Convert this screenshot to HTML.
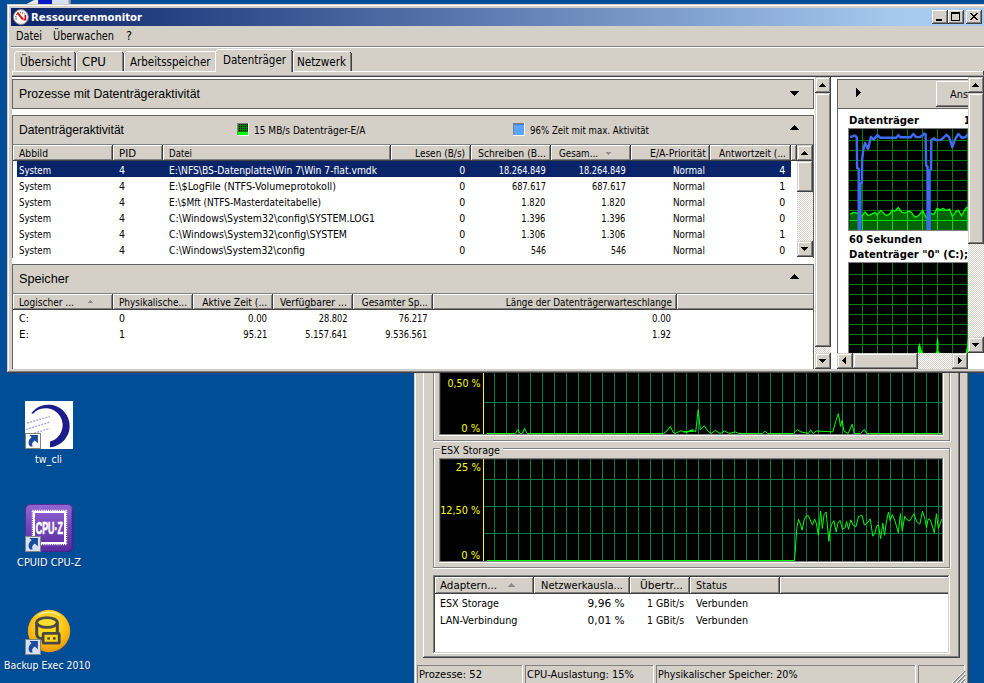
<!DOCTYPE html>
<html lang="de"><head><meta charset="utf-8"><title>Ressourcenmonitor</title><style>
html,body{margin:0;padding:0}
body{width:984px;height:683px;overflow:hidden;background:#004e98;position:relative;font-family:"DejaVu Sans Condensed","DejaVu Sans","Liberation Sans",sans-serif;font-stretch:condensed;font-size:11px}
div,span,svg{position:absolute}
span{white-space:pre}
.hatch{background-image:conic-gradient(#fff 25%,#d4d0c8 0 50%,#fff 0 75%,#d4d0c8 0);background-size:2px 2px}
</style></head><body>
<svg style="left:26px;top:0px;" width="46" height="4" viewBox="0 0 46 4"><polygon points="8,0 12.3,0 12.3,4 0.7,4" fill="#e6e6ec"/><rect x="12.3" y="0" width="13.7" height="4" fill="#0818c4"/><rect x="26" y="0" width="16.8" height="4" fill="#d4e0f6"/><rect x="42.8" y="0" width="1.9" height="4" fill="#a89888"/></svg>
<svg style="left:0;top:395px" width="100" height="265" viewBox="0 395 100 265"><rect x="25" y="401" width="48" height="48" fill="#fff"/><path d="M31.3 413.2A21.3 21.3 0 1 1 50.0 447.2L50.0 441.6A17.0 17.0 0 1 0 33.0 413.8Z" fill="#1c1c8a"/><path d="M27 423L50 416.5M26 429.5L50 422M28 435L50 428.5" stroke="#a8a4cc" stroke-width="1.3" stroke-dasharray="2 1.2" fill="none"/><g transform="translate(25,433)"><rect x="0.5" y="0.5" width="15" height="15" fill="#fff" stroke="#84847c"/><path d="M4.4 2H12.9V10.2L9.8 7.6C7.5 9 6.4 11 7.6 13.5L5.3 13.4C2.8 11 3 7 6.6 4.2Z" fill="#1c4a9c"/></g><defs><linearGradient id="pz" x1="0" y1="0" x2="0" y2="1"><stop offset="0" stop-color="#9368d2"/><stop offset="0.5" stop-color="#7442b8"/><stop offset="1" stop-color="#5a2a9e"/></linearGradient><radialGradient id="by" cx="0.5" cy="0.35" r="0.65"><stop offset="0" stop-color="#ffe648"/><stop offset="0.55" stop-color="#ffc818"/><stop offset="0.85" stop-color="#f4a808"/><stop offset="1" stop-color="#e89400"/></radialGradient></defs><rect x="25.5" y="504.5" width="47" height="47" rx="5" fill="url(#pz)" stroke="#5a2c9c"/><path d="M72.2 509V547A4.5 4.5 0 0 1 67.5 551.5H30" fill="none" stroke="#47208c" stroke-width="1.2"/><rect x="32.5" y="510.5" width="34" height="34" fill="none" stroke="#fff" stroke-width="1.4" stroke-dasharray="1.2 1"/><rect x="34" y="512" width="31" height="31" fill="none" stroke="#fff" stroke-width="2"/><text x="49.3" y="534" stroke="#fff" stroke-width="0.7" font-family="'Liberation Sans',sans-serif" font-weight="bold" font-size="16" fill="#fff" text-anchor="middle" textLength="27" lengthAdjust="spacingAndGlyphs">CPU·Z</text><g transform="translate(25,536)"><rect x="0.5" y="0.5" width="15" height="15" fill="#d6e0f2" stroke="#84847c"/><path d="M4.4 2H12.9V10.2L9.8 7.6C7.5 9 6.4 11 7.6 13.5L5.3 13.4C2.8 11 3 7 6.6 4.2Z" fill="#1c4a9c"/></g><circle cx="49" cy="631" r="21.2" fill="url(#by)"/><path d="M36.8 622.5v13a10.2 4.8 0 0 0 10 4.6v-8" fill="#ffd81c" stroke="none"/><path d="M36.8 622.5v12.5a10.2 4.8 0 0 0 7 4.3M57.2 622.5v10" fill="#ffd81c" stroke="#484848" stroke-width="2.8"/><path d="M36.8 622.5h20.4v11h-20.4z" fill="#ffd81c"/><path d="M36.8 622.5v12.5M57.2 622.5v10" fill="none" stroke="#484848" stroke-width="2.8"/><ellipse cx="47" cy="622.5" rx="10.2" ry="4.8" fill="#ffe030" stroke="#484848" stroke-width="2.8"/><rect x="43.1" y="633.4" width="16.1" height="9.8" rx="0.8" fill="#ffd414" stroke="#484848" stroke-width="2.8"/><rect x="47.3" y="637.2" width="2.6" height="2.4" fill="#484848"/><rect x="53" y="637.2" width="2.6" height="2.4" fill="#484848"/><path d="M38 615.5A14 9 0 0 1 60 616" fill="none" stroke="#fff4c0" stroke-width="1.6" opacity="0.75"/><g transform="translate(25,639)"><rect x="0.5" y="0.5" width="15" height="15" fill="#d6e0f2" stroke="#84847c"/><path d="M4.4 2H12.9V10.2L9.8 7.6C7.5 9 6.4 11 7.6 13.5L5.3 13.4C2.8 11 3 7 6.6 4.2Z" fill="#1c4a9c"/></g></svg>
<span id="t1" style="top:451.5px;line-height:15px;font-size:11px;color:#fff;left:34.5px;transform-origin:0 0;transform:scaleX(0.9686);text-shadow:1px 1px 0 rgba(0,35,80,0.55);">tw_cli</span>
<span id="t2" style="top:554.5px;line-height:15px;font-size:11px;color:#fff;left:16.5px;transform-origin:0 0;transform:scaleX(0.9956);text-shadow:1px 1px 0 rgba(0,35,80,0.55);">CPUID CPU-Z</span>
<span id="t3" style="top:657.5px;line-height:15px;font-size:11px;color:#fff;left:4.0px;transform-origin:0 0;transform:scaleX(0.9504);text-shadow:1px 1px 0 rgba(0,35,80,0.55);">Backup Exec 2010</span>
<div style="left:414px;top:360px;width:555px;height:330px;background:#d4d0c8;"></div>
<div style="left:415px;top:360px;width:1px;height:330px;background:#ffffff;"></div>
<div style="left:967px;top:360px;width:1px;height:330px;background:#808080;"></div>
<div style="left:968px;top:360px;width:1px;height:330px;background:#404040;"></div>
<div style="left:423px;top:360px;width:1px;height:297px;background:#ffffff;"></div>
<div style="left:958px;top:360px;width:1px;height:298px;background:#808080;"></div>
<div style="left:959px;top:360px;width:1px;height:298px;background:#404040;"></div>
<div style="left:424px;top:656px;width:535px;height:1px;background:#808080;"></div>
<div style="left:423px;top:657px;width:537px;height:1px;background:#404040;"></div>
<div style="left:433px;top:360px;width:1px;height:81px;background:#808080;"></div>
<div style="left:434px;top:360px;width:1px;height:80px;background:#ffffff;"></div>
<div style="left:433px;top:440px;width:517px;height:1px;background:#808080;"></div>
<div style="left:433px;top:441px;width:518px;height:1px;background:#ffffff;"></div>
<div style="left:949px;top:360px;width:1px;height:81px;background:#808080;"></div>
<div style="left:950px;top:360px;width:1px;height:82px;background:#ffffff;"></div>
<div style="left:439px;top:360px;width:505px;height:76px;background:#ffffff;"></div>
<div style="left:439px;top:360px;width:504px;height:75px;background:#808080;"></div>
<div style="left:440px;top:360px;width:502px;height:74px;background:#000;"></div>
<div style="left:440px;top:360px;width:1px;height:74px;background:#202020;"></div>
<div style="left:433px;top:448px;width:517px;height:1px;background:#808080;"></div>
<div style="left:434px;top:449px;width:516px;height:1px;background:#ffffff;"></div>
<div style="left:433px;top:448px;width:1px;height:120px;background:#808080;"></div>
<div style="left:434px;top:449px;width:1px;height:118px;background:#ffffff;"></div>
<div style="left:433px;top:567px;width:517px;height:1px;background:#808080;"></div>
<div style="left:433px;top:568px;width:518px;height:1px;background:#ffffff;"></div>
<div style="left:949px;top:448px;width:1px;height:120px;background:#808080;"></div>
<div style="left:950px;top:448px;width:1px;height:121px;background:#ffffff;"></div>
<div style="left:440px;top:444px;width:63px;height:12px;background:#d4d0c8;"></div>
<span id="t4" style="top:442.5px;line-height:15px;font-size:11px;color:#000;left:440.5px;transform-origin:0 0;transform:scaleX(0.9642);">ESX Storage</span>
<div style="left:439px;top:458px;width:505px;height:105px;background:#ffffff;"></div>
<div style="left:439px;top:458px;width:504px;height:104px;background:#808080;"></div>
<div style="left:440px;top:459px;width:502px;height:102px;background:#000;"></div>
<div style="left:440px;top:459px;width:502px;height:1px;background:#202020;"></div>
<div style="left:440px;top:459px;width:1px;height:102px;background:#202020;"></div>
<svg style="left:440px;top:372px" width="502" height="191" viewBox="440 372 502 191"><rect x="494" y="372" width="1" height="62" fill="#008040"/><rect x="494" y="459" width="1" height="102" fill="#008040"/><rect x="506" y="372" width="1" height="62" fill="#008040"/><rect x="506" y="459" width="1" height="102" fill="#008040"/><rect x="518" y="372" width="1" height="62" fill="#008040"/><rect x="518" y="459" width="1" height="102" fill="#008040"/><rect x="530" y="372" width="1" height="62" fill="#008040"/><rect x="530" y="459" width="1" height="102" fill="#008040"/><rect x="542" y="372" width="1" height="62" fill="#008040"/><rect x="542" y="459" width="1" height="102" fill="#008040"/><rect x="554" y="372" width="1" height="62" fill="#008040"/><rect x="554" y="459" width="1" height="102" fill="#008040"/><rect x="566" y="372" width="1" height="62" fill="#008040"/><rect x="566" y="459" width="1" height="102" fill="#008040"/><rect x="578" y="372" width="1" height="62" fill="#008040"/><rect x="578" y="459" width="1" height="102" fill="#008040"/><rect x="590" y="372" width="1" height="62" fill="#008040"/><rect x="590" y="459" width="1" height="102" fill="#008040"/><rect x="602" y="372" width="1" height="62" fill="#008040"/><rect x="602" y="459" width="1" height="102" fill="#008040"/><rect x="614" y="372" width="1" height="62" fill="#008040"/><rect x="614" y="459" width="1" height="102" fill="#008040"/><rect x="626" y="372" width="1" height="62" fill="#008040"/><rect x="626" y="459" width="1" height="102" fill="#008040"/><rect x="638" y="372" width="1" height="62" fill="#008040"/><rect x="638" y="459" width="1" height="102" fill="#008040"/><rect x="650" y="372" width="1" height="62" fill="#008040"/><rect x="650" y="459" width="1" height="102" fill="#008040"/><rect x="662" y="372" width="1" height="62" fill="#008040"/><rect x="662" y="459" width="1" height="102" fill="#008040"/><rect x="674" y="372" width="1" height="62" fill="#008040"/><rect x="674" y="459" width="1" height="102" fill="#008040"/><rect x="686" y="372" width="1" height="62" fill="#008040"/><rect x="686" y="459" width="1" height="102" fill="#008040"/><rect x="698" y="372" width="1" height="62" fill="#008040"/><rect x="698" y="459" width="1" height="102" fill="#008040"/><rect x="710" y="372" width="1" height="62" fill="#008040"/><rect x="710" y="459" width="1" height="102" fill="#008040"/><rect x="722" y="372" width="1" height="62" fill="#008040"/><rect x="722" y="459" width="1" height="102" fill="#008040"/><rect x="734" y="372" width="1" height="62" fill="#008040"/><rect x="734" y="459" width="1" height="102" fill="#008040"/><rect x="746" y="372" width="1" height="62" fill="#008040"/><rect x="746" y="459" width="1" height="102" fill="#008040"/><rect x="758" y="372" width="1" height="62" fill="#008040"/><rect x="758" y="459" width="1" height="102" fill="#008040"/><rect x="770" y="372" width="1" height="62" fill="#008040"/><rect x="770" y="459" width="1" height="102" fill="#008040"/><rect x="782" y="372" width="1" height="62" fill="#008040"/><rect x="782" y="459" width="1" height="102" fill="#008040"/><rect x="794" y="372" width="1" height="62" fill="#008040"/><rect x="794" y="459" width="1" height="102" fill="#008040"/><rect x="806" y="372" width="1" height="62" fill="#008040"/><rect x="806" y="459" width="1" height="102" fill="#008040"/><rect x="818" y="372" width="1" height="62" fill="#008040"/><rect x="818" y="459" width="1" height="102" fill="#008040"/><rect x="830" y="372" width="1" height="62" fill="#008040"/><rect x="830" y="459" width="1" height="102" fill="#008040"/><rect x="842" y="372" width="1" height="62" fill="#008040"/><rect x="842" y="459" width="1" height="102" fill="#008040"/><rect x="854" y="372" width="1" height="62" fill="#008040"/><rect x="854" y="459" width="1" height="102" fill="#008040"/><rect x="866" y="372" width="1" height="62" fill="#008040"/><rect x="866" y="459" width="1" height="102" fill="#008040"/><rect x="878" y="372" width="1" height="62" fill="#008040"/><rect x="878" y="459" width="1" height="102" fill="#008040"/><rect x="890" y="372" width="1" height="62" fill="#008040"/><rect x="890" y="459" width="1" height="102" fill="#008040"/><rect x="902" y="372" width="1" height="62" fill="#008040"/><rect x="902" y="459" width="1" height="102" fill="#008040"/><rect x="914" y="372" width="1" height="62" fill="#008040"/><rect x="914" y="459" width="1" height="102" fill="#008040"/><rect x="926" y="372" width="1" height="62" fill="#008040"/><rect x="926" y="459" width="1" height="102" fill="#008040"/><rect x="938" y="372" width="1" height="62" fill="#008040"/><rect x="938" y="459" width="1" height="102" fill="#008040"/><rect x="483" y="402" width="459" height="1" fill="#008040"/><rect x="483" y="479" width="459" height="1" fill="#008040"/><rect x="483" y="506" width="459" height="1" fill="#008040"/><rect x="483" y="533" width="459" height="1" fill="#008040"/><rect x="483" y="372" width="1" height="62" fill="#ffff00"/><rect x="483" y="459" width="1" height="102" fill="#ffff00"/><polyline points="486.7,433.5 515.3,433.5 517.9,429.4 520.0,433.5 522.4,433.5 524.5,428.1 527.1,433.5 663.2,433.5 667.2,430.8 670.3,426.3 673.0,432.1 675.1,433.5 680.4,430.8 687.0,432.1 691.0,430.2 693.6,431.3 683.5,431.9 688.1,431.9 692.7,429.5 695.7,431.9 698.2,409.6 700.3,429.5 704.3,425.8 707.9,431.0 711.0,433.5 715.5,430.4 720.1,433.5 724.7,431.0 729.3,433.5 735.4,431.9 738.4,433.5 762.8,433.5 765.2,431.0 767.4,433.5 793.3,433.5 797.3,429.5 800.9,431.9 808.5,433.5 810.7,429.8 813.1,433.5 816.2,431.0 832.9,431.9 836.0,420.3 838.4,413.6 840.5,426.4 842.1,420.3 843.9,431.0 848.2,433.5 852.1,424.3 854.3,433.5 860.4,433.5 864.3,429.5 866.5,433.5 875.6,433.5 878.7,433.5 887.8,433.5 890.9,433.5 903.0,433.5 909.1,433.5 915.2,433.5 921.3,433.5 930.5,433.5 932.0,433.5 941.8,433.5" fill="none" stroke="#00ff00" stroke-width="1"/><polyline points="487.0,560.5 794.3,560.5 795.2,552.6 796.1,537.9 796.9,527.6 798.5,519.3 800.4,524.1 802.1,530.2 804.2,519.8 805.9,516.3 808.2,515.5 810.2,519.8 812.5,525.0 814.6,518.9 816.3,523.2 818.4,535.3 820.6,511.2 822.3,528.4 824.1,514.6 826.1,512.0 828.9,541.4 830.1,529.3 831.8,524.1 833.9,520.7 836.2,531.9 837.9,523.2 840.0,520.3 842.5,529.3 845.3,527.6 846.5,521.5 848.6,529.3 850.8,519.8 852.9,525.0 856.0,526.7 858.6,516.3 862.1,515.5 864.3,525.0 867.2,523.2 870.2,518.9 872.8,536.2 874.7,533.6 876.8,525.8 878.5,525.0 880.6,538.8 882.8,523.2 884.5,535.3 886.3,522.4 888.5,512.0 890.2,520.7 892.3,514.6 894.9,520.7 898.3,532.7 900.4,513.7 902.3,531.0 904.7,516.3 907.0,519.8 909.9,520.7 913.9,513.7 916.5,521.5 919.9,524.1 922.5,511.2 925.1,519.8 926.5,527.6 928.2,518.9 930.3,519.8 934.3,532.7 936.4,513.7 938.4,528.4 941.9,518.9" fill="none" stroke="#00ff00" stroke-width="1"/></svg>
<span id="t5" style="top:376.5px;line-height:14px;font-size:10px;color:#ffff00;right:503.5px;transform-origin:100% 0;transform:scaleX(1.0497);">0,50 %</span>
<span id="t6" style="top:421.5px;line-height:14px;font-size:10px;color:#ffff00;right:503.5px;transform-origin:100% 0;transform:scaleX(1.1085);">0 %</span>
<span id="t7" style="top:461.0px;line-height:14px;font-size:10px;color:#ffff00;right:503.5px;transform-origin:100% 0;transform:scaleX(1.0936);">25 %</span>
<span id="t8" style="top:503.5px;line-height:14px;font-size:10px;color:#ffff00;right:503.5px;transform-origin:100% 0;transform:scaleX(1.0765);">12,50 %</span>
<span id="t9" style="top:549.0px;line-height:14px;font-size:10px;color:#ffff00;right:503.5px;transform-origin:100% 0;transform:scaleX(1.1085);">0 %</span>
<div style="left:433px;top:575px;width:517px;height:79px;background:#ffffff;"></div>
<div style="left:433px;top:575px;width:516px;height:1px;background:#808080;"></div>
<div style="left:433px;top:575px;width:1px;height:78px;background:#808080;"></div>
<div style="left:434px;top:576px;width:514px;height:1px;background:#404040;"></div>
<div style="left:434px;top:576px;width:1px;height:76px;background:#404040;"></div>
<div style="left:433px;top:653px;width:517px;height:1px;background:#ffffff;"></div>
<div style="left:949px;top:575px;width:1px;height:79px;background:#ffffff;"></div>
<div style="left:434px;top:652px;width:515px;height:1px;background:#d4d0c8;"></div>
<div style="left:948px;top:576px;width:1px;height:77px;background:#d4d0c8;"></div>
<div style="left:435px;top:577px;width:99px;height:17px;background:#d4d0c8;"></div>
<div style="left:435px;top:577px;width:98px;height:1px;background:#ffffff;"></div>
<div style="left:435px;top:577px;width:1px;height:16px;background:#ffffff;"></div>
<div style="left:435px;top:593px;width:99px;height:1px;background:#404040;"></div>
<div style="left:533px;top:577px;width:1px;height:17px;background:#404040;"></div>
<div style="left:436px;top:592px;width:97px;height:1px;background:#808080;"></div>
<div style="left:532px;top:578px;width:1px;height:15px;background:#808080;"></div>
<div style="left:534px;top:577px;width:96px;height:17px;background:#d4d0c8;"></div>
<div style="left:534px;top:577px;width:95px;height:1px;background:#ffffff;"></div>
<div style="left:534px;top:577px;width:1px;height:16px;background:#ffffff;"></div>
<div style="left:534px;top:593px;width:96px;height:1px;background:#404040;"></div>
<div style="left:629px;top:577px;width:1px;height:17px;background:#404040;"></div>
<div style="left:535px;top:592px;width:94px;height:1px;background:#808080;"></div>
<div style="left:628px;top:578px;width:1px;height:15px;background:#808080;"></div>
<div style="left:630px;top:577px;width:60px;height:17px;background:#d4d0c8;"></div>
<div style="left:630px;top:577px;width:59px;height:1px;background:#ffffff;"></div>
<div style="left:630px;top:577px;width:1px;height:16px;background:#ffffff;"></div>
<div style="left:630px;top:593px;width:60px;height:1px;background:#404040;"></div>
<div style="left:689px;top:577px;width:1px;height:17px;background:#404040;"></div>
<div style="left:631px;top:592px;width:58px;height:1px;background:#808080;"></div>
<div style="left:688px;top:578px;width:1px;height:15px;background:#808080;"></div>
<div style="left:690px;top:577px;width:90px;height:17px;background:#d4d0c8;"></div>
<div style="left:690px;top:577px;width:89px;height:1px;background:#ffffff;"></div>
<div style="left:690px;top:577px;width:1px;height:16px;background:#ffffff;"></div>
<div style="left:690px;top:593px;width:90px;height:1px;background:#404040;"></div>
<div style="left:779px;top:577px;width:1px;height:17px;background:#404040;"></div>
<div style="left:691px;top:592px;width:88px;height:1px;background:#808080;"></div>
<div style="left:778px;top:578px;width:1px;height:15px;background:#808080;"></div>
<div style="left:780px;top:577px;width:168px;height:17px;background:#d4d0c8;"></div>
<div style="left:780px;top:577px;width:168px;height:1px;background:#ffffff;"></div>
<div style="left:780px;top:577px;width:1px;height:16px;background:#ffffff;"></div>
<div style="left:780px;top:593px;width:168px;height:1px;background:#404040;"></div>
<div style="left:781px;top:592px;width:167px;height:1px;background:#808080;"></div>
<span id="t10" style="top:578.0px;line-height:15px;font-size:11px;color:#000;left:440.0px;transform-origin:0 0;transform:scaleX(1.0411);">Adaptern...</span>
<span id="t11" style="top:578.0px;line-height:15px;font-size:11px;color:#000;left:540.5px;transform-origin:0 0;transform:scaleX(0.9989);">Netzwerkausla...</span>
<span id="t12" style="top:578.0px;line-height:15px;font-size:11px;color:#000;left:639.5px;transform-origin:0 0;transform:scaleX(1.0737);">Übertr...</span>
<span id="t13" style="top:578.0px;line-height:15px;font-size:11px;color:#000;left:695.5px;transform-origin:0 0;transform:scaleX(0.9827);">Status</span>
<span id="t14" style="top:596.0px;line-height:15px;font-size:11px;color:#000;left:440.0px;transform-origin:0 0;transform:scaleX(0.9642);">ESX Storage</span>
<span id="t15" style="top:613.0px;line-height:15px;font-size:11px;color:#000;left:440.0px;transform-origin:0 0;transform:scaleX(0.9766);">LAN-Verbindung</span>
<span id="t16" style="top:596.0px;line-height:15px;font-size:11px;color:#000;right:359.0px;transform-origin:100% 0;transform:scaleX(1.0700);">9,96 %</span>
<span id="t17" style="top:613.0px;line-height:15px;font-size:11px;color:#000;right:359.0px;transform-origin:100% 0;transform:scaleX(1.0700);">0,01 %</span>
<span id="t18" style="top:596.0px;line-height:15px;font-size:11px;color:#000;right:300.0px;transform-origin:100% 0;transform:scaleX(0.9483);">1 GBit/s</span>
<span id="t19" style="top:613.0px;line-height:15px;font-size:11px;color:#000;right:300.0px;transform-origin:100% 0;transform:scaleX(0.9483);">1 GBit/s</span>
<span id="t20" style="top:596.0px;line-height:15px;font-size:11px;color:#000;left:695.5px;transform-origin:0 0;transform:scaleX(0.9708);">Verbunden</span>
<span id="t21" style="top:613.0px;line-height:15px;font-size:11px;color:#000;left:695.5px;transform-origin:0 0;transform:scaleX(0.9708);">Verbunden</span>
<div style="left:511px;top:583px;width:1px;height:1px;background:#8c8c8c;"></div>
<div style="left:510px;top:584px;width:3px;height:1px;background:#8c8c8c;"></div>
<div style="left:509px;top:585px;width:5px;height:1px;background:#8c8c8c;"></div>
<div style="left:508px;top:586px;width:7px;height:1px;background:#8c8c8c;"></div>
<div style="left:417px;top:665px;width:105px;height:1px;background:#808080;"></div>
<div style="left:417px;top:665px;width:1px;height:19px;background:#808080;"></div>
<div style="left:417px;top:684px;width:106px;height:1px;background:#ffffff;"></div>
<div style="left:522px;top:665px;width:1px;height:20px;background:#ffffff;"></div>
<div style="left:525px;top:665px;width:128px;height:1px;background:#808080;"></div>
<div style="left:525px;top:665px;width:1px;height:19px;background:#808080;"></div>
<div style="left:525px;top:684px;width:129px;height:1px;background:#ffffff;"></div>
<div style="left:653px;top:665px;width:1px;height:20px;background:#ffffff;"></div>
<div style="left:656px;top:665px;width:259px;height:1px;background:#808080;"></div>
<div style="left:656px;top:665px;width:1px;height:19px;background:#808080;"></div>
<div style="left:656px;top:684px;width:260px;height:1px;background:#ffffff;"></div>
<div style="left:915px;top:665px;width:1px;height:20px;background:#ffffff;"></div>
<div style="left:918px;top:665px;width:46px;height:1px;background:#808080;"></div>
<div style="left:918px;top:665px;width:1px;height:19px;background:#808080;"></div>
<div style="left:918px;top:684px;width:47px;height:1px;background:#ffffff;"></div>
<div style="left:964px;top:665px;width:1px;height:20px;background:#ffffff;"></div>
<span id="t22" style="top:666.5px;line-height:15px;font-size:11px;color:#000;left:418.5px;transform-origin:0 0;transform:scaleX(1.0093);">Prozesse: 52</span>
<span id="t23" style="top:666.5px;line-height:15px;font-size:11px;color:#000;left:526.5px;transform-origin:0 0;transform:scaleX(1.0018);">CPU-Auslastung: 15%</span>
<span id="t24" style="top:666.5px;line-height:15px;font-size:11px;color:#000;left:657.5px;transform-origin:0 0;transform:scaleX(0.9631);">Physikalischer Speicher: 20%</span>
<svg style="left:950px;top:668px;" width="16" height="16" viewBox="0 0 16 16"><path d="M15 3L3 15M15 7L7 15M15 11L11 15" stroke="#808080" stroke-width="1.6"/><path d="M15 2L2 15M15 6L6 15M15 10L10 15" stroke="#fff" stroke-width="1"/></svg>
<div style="left:7px;top:4px;width:981px;height:369px;background:#d4d0c8;"></div>
<div style="left:8px;top:5px;width:979px;height:1px;background:#ffffff;"></div>
<div style="left:8px;top:5px;width:1px;height:366px;background:#ffffff;"></div>
<div style="left:11px;top:8px;width:973px;height:18px;background:linear-gradient(90deg,#0a246a 0%,#a6caf0 92%);"></div>
<svg style="left:12px;top:8px;" width="18" height="18" viewBox="0 0 18 18"><circle cx="8.9" cy="9" r="7.4" fill="#fff" stroke="#9a9088" stroke-width="1"/><path d="M4.3 11.5A4.9 4.9 0 0 1 12.6 6.4" fill="none" stroke="#5a6a60" stroke-width="1.4" stroke-dasharray="1.2 1"/><path d="M5.3 4.7L10.9 11.3" stroke="#e80000" stroke-width="1.9" fill="none"/><path d="M13.4 7v4.6h-2" stroke="#e80000" stroke-width="1.6" fill="none"/></svg>
<span id="t25" style="top:9.5px;line-height:15px;font-size:11px;color:#fff;font-weight:bold;left:30.5px;transform-origin:0 0;transform:scaleX(1.0236);">Ressourcenmonitor</span>
<div style="left:932px;top:10px;width:16px;height:14px;background:#d4d0c8;"></div>
<div style="left:932px;top:10px;width:15px;height:1px;background:#ffffff;"></div>
<div style="left:932px;top:10px;width:1px;height:13px;background:#ffffff;"></div>
<div style="left:932px;top:23px;width:16px;height:1px;background:#404040;"></div>
<div style="left:947px;top:10px;width:1px;height:14px;background:#404040;"></div>
<div style="left:933px;top:22px;width:14px;height:1px;background:#808080;"></div>
<div style="left:946px;top:11px;width:1px;height:12px;background:#808080;"></div>
<div style="left:948px;top:10px;width:16px;height:14px;background:#d4d0c8;"></div>
<div style="left:948px;top:10px;width:15px;height:1px;background:#ffffff;"></div>
<div style="left:948px;top:10px;width:1px;height:13px;background:#ffffff;"></div>
<div style="left:948px;top:23px;width:16px;height:1px;background:#404040;"></div>
<div style="left:963px;top:10px;width:1px;height:14px;background:#404040;"></div>
<div style="left:949px;top:22px;width:14px;height:1px;background:#808080;"></div>
<div style="left:962px;top:11px;width:1px;height:12px;background:#808080;"></div>
<div style="left:966px;top:10px;width:16px;height:14px;background:#d4d0c8;"></div>
<div style="left:966px;top:10px;width:15px;height:1px;background:#ffffff;"></div>
<div style="left:966px;top:10px;width:1px;height:13px;background:#ffffff;"></div>
<div style="left:966px;top:23px;width:16px;height:1px;background:#404040;"></div>
<div style="left:981px;top:10px;width:1px;height:14px;background:#404040;"></div>
<div style="left:967px;top:22px;width:14px;height:1px;background:#808080;"></div>
<div style="left:980px;top:11px;width:1px;height:12px;background:#808080;"></div>
<div style="left:936px;top:19px;width:6px;height:2px;background:#000;"></div>
<div style="left:951px;top:12px;width:9px;height:9px;background:#000;"></div>
<div style="left:952px;top:14px;width:7px;height:6px;background:#d4d0c8;"></div>
<svg style="left:970px;top:13px;shape-rendering:crispEdges;" width="8" height="7" viewBox="0 0 8 7"><path d="M0.5 0L7.5 7M7.5 0L0.5 7" stroke="#000" stroke-width="1.7" fill="none"/></svg>
<span id="t26" style="top:28.0px;line-height:16px;font-size:12px;color:#000;left:15.5px;transform-origin:0 0;transform:scaleX(0.9024);">Datei</span>
<span id="t27" style="top:28.0px;line-height:16px;font-size:12px;color:#000;left:52.5px;transform-origin:0 0;transform:scaleX(0.9029);">Überwachen</span>
<span id="t28" style="top:28.0px;line-height:16px;font-size:12px;color:#000;left:125.5px;transform-origin:0 0;transform:scaleX(1.0463);">?</span>
<div style="left:11px;top:46px;width:973px;height:1px;background:#808080;"></div>
<div style="left:11px;top:47px;width:973px;height:1px;background:#ffffff;"></div>
<div style="left:12px;top:71px;width:972px;height:1px;background:#ffffff;"></div>
<div style="left:12px;top:71px;width:1px;height:5px;background:#ffffff;"></div>
<div style="left:983px;top:71px;width:1px;height:6px;background:#404040;"></div>
<div style="left:14px;top:51px;width:62px;height:20px;background:#d4d0c8;"></div>
<div style="left:14px;top:53px;width:1px;height:18px;background:#ffffff;"></div>
<div style="left:15px;top:52px;width:1px;height:1px;background:#ffffff;"></div>
<div style="left:16px;top:51px;width:58px;height:1px;background:#ffffff;"></div>
<div style="left:74px;top:53px;width:1px;height:18px;background:#808080;"></div>
<div style="left:75px;top:53px;width:1px;height:18px;background:#404040;"></div>
<div style="left:74px;top:52px;width:1px;height:1px;background:#404040;"></div>
<div style="left:76px;top:51px;width:48px;height:20px;background:#d4d0c8;"></div>
<div style="left:76px;top:53px;width:1px;height:18px;background:#ffffff;"></div>
<div style="left:77px;top:52px;width:1px;height:1px;background:#ffffff;"></div>
<div style="left:78px;top:51px;width:44px;height:1px;background:#ffffff;"></div>
<div style="left:122px;top:53px;width:1px;height:18px;background:#808080;"></div>
<div style="left:123px;top:53px;width:1px;height:18px;background:#404040;"></div>
<div style="left:122px;top:52px;width:1px;height:1px;background:#404040;"></div>
<div style="left:124px;top:51px;width:94px;height:20px;background:#d4d0c8;"></div>
<div style="left:124px;top:53px;width:1px;height:18px;background:#ffffff;"></div>
<div style="left:125px;top:52px;width:1px;height:1px;background:#ffffff;"></div>
<div style="left:126px;top:51px;width:90px;height:1px;background:#ffffff;"></div>
<div style="left:216px;top:53px;width:1px;height:18px;background:#808080;"></div>
<div style="left:217px;top:53px;width:1px;height:18px;background:#404040;"></div>
<div style="left:216px;top:52px;width:1px;height:1px;background:#404040;"></div>
<div style="left:293px;top:51px;width:59px;height:20px;background:#d4d0c8;"></div>
<div style="left:293px;top:53px;width:1px;height:18px;background:#ffffff;"></div>
<div style="left:294px;top:52px;width:1px;height:1px;background:#ffffff;"></div>
<div style="left:295px;top:51px;width:55px;height:1px;background:#ffffff;"></div>
<div style="left:350px;top:53px;width:1px;height:18px;background:#808080;"></div>
<div style="left:351px;top:53px;width:1px;height:18px;background:#404040;"></div>
<div style="left:350px;top:52px;width:1px;height:1px;background:#404040;"></div>
<div style="left:215px;top:49px;width:78px;height:23px;background:#d4d0c8;"></div>
<div style="left:215px;top:51px;width:1px;height:21px;background:#ffffff;"></div>
<div style="left:216px;top:50px;width:1px;height:1px;background:#ffffff;"></div>
<div style="left:217px;top:49px;width:74px;height:1px;background:#ffffff;"></div>
<div style="left:291px;top:51px;width:1px;height:21px;background:#808080;"></div>
<div style="left:292px;top:51px;width:1px;height:21px;background:#404040;"></div>
<div style="left:291px;top:50px;width:1px;height:1px;background:#404040;"></div>
<span id="t29" style="top:54.0px;line-height:16px;font-size:12px;color:#000;left:19.5px;transform-origin:0 0;transform:scaleX(0.9906);">Übersicht</span>
<span id="t30" style="top:54.0px;line-height:16px;font-size:12px;color:#000;left:81.5px;transform-origin:0 0;transform:scaleX(1.0925);">CPU</span>
<span id="t31" style="top:54.0px;line-height:16px;font-size:12px;color:#000;left:129.5px;transform-origin:0 0;transform:scaleX(0.9564);">Arbeitsspeicher</span>
<span id="t32" style="top:52.0px;line-height:16px;font-size:12px;color:#000;left:222.5px;transform-origin:0 0;transform:scaleX(0.9564);">Datenträger</span>
<span id="t33" style="top:54.0px;line-height:16px;font-size:12px;color:#000;left:296.5px;transform-origin:0 0;transform:scaleX(0.9649);">Netzwerk</span>
<div style="left:12px;top:75px;width:972px;height:1px;background:#a0a0a0;"></div>
<div style="left:12px;top:76px;width:972px;height:1px;background:#404040;"></div>
<div style="left:12px;top:77px;width:972px;height:292px;background:#ffffff;"></div>
<div style="left:12px;top:79px;width:802px;height:30px;background:#646464;"></div>
<div style="left:13px;top:80px;width:800px;height:28px;background:#d4d0c8;"></div>
<span id="t34" style="top:85.0px;line-height:17px;font-size:13px;color:#000;font-family:'Liberation Sans',sans-serif;left:18.5px;transform-origin:0 0;transform:scaleX(0.9453);">Prozesse mit Datenträgeraktivität</span>
<div style="left:790px;top:91px;width:9px;height:1px;background:#000;"></div>
<div style="left:791px;top:92px;width:7px;height:1px;background:#000;"></div>
<div style="left:792px;top:93px;width:5px;height:1px;background:#000;"></div>
<div style="left:793px;top:94px;width:3px;height:1px;background:#000;"></div>
<div style="left:794px;top:95px;width:1px;height:1px;background:#000;"></div>
<div style="left:12px;top:115px;width:802px;height:143px;background:#646464;"></div>
<div style="left:13px;top:116px;width:800px;height:141px;background:#d4d0c8;"></div>
<span id="t35" style="top:121.0px;line-height:17px;font-size:13px;color:#000;font-family:'Liberation Sans',sans-serif;left:18.5px;transform-origin:0 0;transform:scaleX(0.9314);">Datenträgeraktivität</span>
<div style="left:794px;top:125px;width:1px;height:1px;background:#000;"></div>
<div style="left:793px;top:126px;width:3px;height:1px;background:#000;"></div>
<div style="left:792px;top:127px;width:5px;height:1px;background:#000;"></div>
<div style="left:791px;top:128px;width:7px;height:1px;background:#000;"></div>
<div style="left:790px;top:129px;width:9px;height:1px;background:#000;"></div>
<div style="left:237px;top:123px;width:12px;height:13px;background:#ffffff;"></div>
<div style="left:237px;top:123px;width:11px;height:1px;background:#808080;"></div>
<div style="left:237px;top:123px;width:1px;height:12px;background:#808080;"></div>
<div style="left:238px;top:124px;width:10px;height:8px;background:#008000;background-image:conic-gradient(#000 25%,transparent 0);background-size:2px 2px;"></div>
<div style="left:238px;top:132px;width:10px;height:3px;background:#00ff00;"></div>
<span id="t36" style="top:123.5px;line-height:14px;font-size:10px;color:#000;left:253.5px;transform-origin:0 0;transform:scaleX(1.0028);">15 MB/s Datenträger-E/A</span>
<div style="left:513px;top:123px;width:12px;height:13px;background:#ffffff;"></div>
<div style="left:513px;top:123px;width:11px;height:1px;background:#808080;"></div>
<div style="left:513px;top:123px;width:1px;height:12px;background:#808080;"></div>
<div style="left:514px;top:124px;width:10px;height:11px;background:#5aa6ff;"></div>
<div style="left:514px;top:124px;width:10px;height:1px;background:#3c7cff;"></div>
<span id="t37" style="top:123.5px;line-height:14px;font-size:10px;color:#000;left:529.5px;transform-origin:0 0;transform:scaleX(0.9583);">96% Zeit mit max. Aktivität</span>
<div style="left:13px;top:144px;width:800px;height:1px;background:#808080;"></div>
<div style="left:13px;top:145px;width:800px;height:113px;background:#ffffff;"></div>
<div style="left:13px;top:145px;width:100px;height:16px;background:#d4d0c8;"></div>
<div style="left:13px;top:145px;width:99px;height:1px;background:#ffffff;"></div>
<div style="left:13px;top:145px;width:1px;height:15px;background:#ffffff;"></div>
<div style="left:13px;top:160px;width:100px;height:1px;background:#404040;"></div>
<div style="left:112px;top:145px;width:1px;height:16px;background:#404040;"></div>
<div style="left:14px;top:159px;width:98px;height:1px;background:#808080;"></div>
<div style="left:111px;top:146px;width:1px;height:14px;background:#808080;"></div>
<div style="left:113px;top:145px;width:50px;height:16px;background:#d4d0c8;"></div>
<div style="left:113px;top:145px;width:49px;height:1px;background:#ffffff;"></div>
<div style="left:113px;top:145px;width:1px;height:15px;background:#ffffff;"></div>
<div style="left:113px;top:160px;width:50px;height:1px;background:#404040;"></div>
<div style="left:162px;top:145px;width:1px;height:16px;background:#404040;"></div>
<div style="left:114px;top:159px;width:48px;height:1px;background:#808080;"></div>
<div style="left:161px;top:146px;width:1px;height:14px;background:#808080;"></div>
<div style="left:163px;top:145px;width:228px;height:16px;background:#d4d0c8;"></div>
<div style="left:163px;top:145px;width:227px;height:1px;background:#ffffff;"></div>
<div style="left:163px;top:145px;width:1px;height:15px;background:#ffffff;"></div>
<div style="left:163px;top:160px;width:228px;height:1px;background:#404040;"></div>
<div style="left:390px;top:145px;width:1px;height:16px;background:#404040;"></div>
<div style="left:164px;top:159px;width:226px;height:1px;background:#808080;"></div>
<div style="left:389px;top:146px;width:1px;height:14px;background:#808080;"></div>
<div style="left:391px;top:145px;width:80px;height:16px;background:#d4d0c8;"></div>
<div style="left:391px;top:145px;width:79px;height:1px;background:#ffffff;"></div>
<div style="left:391px;top:145px;width:1px;height:15px;background:#ffffff;"></div>
<div style="left:391px;top:160px;width:80px;height:1px;background:#404040;"></div>
<div style="left:470px;top:145px;width:1px;height:16px;background:#404040;"></div>
<div style="left:392px;top:159px;width:78px;height:1px;background:#808080;"></div>
<div style="left:469px;top:146px;width:1px;height:14px;background:#808080;"></div>
<div style="left:471px;top:145px;width:80px;height:16px;background:#d4d0c8;"></div>
<div style="left:471px;top:145px;width:79px;height:1px;background:#ffffff;"></div>
<div style="left:471px;top:145px;width:1px;height:15px;background:#ffffff;"></div>
<div style="left:471px;top:160px;width:80px;height:1px;background:#404040;"></div>
<div style="left:550px;top:145px;width:1px;height:16px;background:#404040;"></div>
<div style="left:472px;top:159px;width:78px;height:1px;background:#808080;"></div>
<div style="left:549px;top:146px;width:1px;height:14px;background:#808080;"></div>
<div style="left:551px;top:145px;width:80px;height:16px;background:#d4d0c8;"></div>
<div style="left:551px;top:145px;width:79px;height:1px;background:#ffffff;"></div>
<div style="left:551px;top:145px;width:1px;height:15px;background:#ffffff;"></div>
<div style="left:551px;top:160px;width:80px;height:1px;background:#404040;"></div>
<div style="left:630px;top:145px;width:1px;height:16px;background:#404040;"></div>
<div style="left:552px;top:159px;width:78px;height:1px;background:#808080;"></div>
<div style="left:629px;top:146px;width:1px;height:14px;background:#808080;"></div>
<div style="left:631px;top:145px;width:79px;height:16px;background:#d4d0c8;"></div>
<div style="left:631px;top:145px;width:78px;height:1px;background:#ffffff;"></div>
<div style="left:631px;top:145px;width:1px;height:15px;background:#ffffff;"></div>
<div style="left:631px;top:160px;width:79px;height:1px;background:#404040;"></div>
<div style="left:709px;top:145px;width:1px;height:16px;background:#404040;"></div>
<div style="left:632px;top:159px;width:77px;height:1px;background:#808080;"></div>
<div style="left:708px;top:146px;width:1px;height:14px;background:#808080;"></div>
<div style="left:710px;top:145px;width:81px;height:16px;background:#d4d0c8;"></div>
<div style="left:710px;top:145px;width:80px;height:1px;background:#ffffff;"></div>
<div style="left:710px;top:145px;width:1px;height:15px;background:#ffffff;"></div>
<div style="left:710px;top:160px;width:81px;height:1px;background:#404040;"></div>
<div style="left:790px;top:145px;width:1px;height:16px;background:#404040;"></div>
<div style="left:711px;top:159px;width:79px;height:1px;background:#808080;"></div>
<div style="left:789px;top:146px;width:1px;height:14px;background:#808080;"></div>
<div style="left:791px;top:145px;width:6px;height:16px;background:#d4d0c8;"></div>
<div style="left:791px;top:145px;width:5px;height:1px;background:#ffffff;"></div>
<div style="left:791px;top:145px;width:1px;height:15px;background:#ffffff;"></div>
<div style="left:791px;top:160px;width:6px;height:1px;background:#404040;"></div>
<div style="left:796px;top:145px;width:1px;height:16px;background:#404040;"></div>
<div style="left:792px;top:159px;width:4px;height:1px;background:#808080;"></div>
<div style="left:795px;top:146px;width:1px;height:14px;background:#808080;"></div>
<span id="t38" style="top:145.5px;line-height:15px;font-size:11px;color:#000;left:18.5px;transform-origin:0 0;transform:scaleX(0.9317);">Abbild</span>
<span id="t39" style="top:145.5px;line-height:15px;font-size:11px;color:#000;left:118.5px;transform-origin:0 0;transform:scaleX(1.0293);">PID</span>
<span id="t40" style="top:145.5px;line-height:15px;font-size:11px;color:#000;left:168.5px;transform-origin:0 0;transform:scaleX(0.8710);">Datei</span>
<span id="t41" style="top:145.5px;line-height:15px;font-size:11px;color:#000;right:518.5px;transform-origin:100% 0;transform:scaleX(0.9078);">Lesen (B/s)</span>
<span id="t42" style="top:145.5px;line-height:15px;font-size:11px;color:#000;left:477.5px;transform-origin:0 0;transform:scaleX(0.9375);">Schreiben (B...</span>
<span id="t43" style="top:145.5px;line-height:15px;font-size:11px;color:#000;left:558.5px;transform-origin:0 0;transform:scaleX(0.8851);">Gesam...</span>
<span id="t44" style="top:145.5px;line-height:15px;font-size:11px;color:#000;right:278.5px;transform-origin:100% 0;transform:scaleX(0.9497);">E/A-Priorität</span>
<span id="t45" style="top:145.5px;line-height:15px;font-size:11px;color:#000;left:718.5px;transform-origin:0 0;transform:scaleX(0.9133);">Antwortzeit (...</span>
<div style="left:606px;top:152px;width:5px;height:1px;background:#8c8c8c;"></div>
<div style="left:607px;top:153px;width:3px;height:1px;background:#8c8c8c;"></div>
<div style="left:608px;top:154px;width:1px;height:1px;background:#8c8c8c;"></div>
<div style="left:17px;top:161px;width:774px;height:16px;background:#0a246a;"></div>
<span id="t46" style="top:162.5px;line-height:15px;font-size:11px;color:#fff;left:18.5px;transform-origin:0 0;transform:scaleX(0.8671);">System</span>
<span id="t47" style="top:162.5px;line-height:15px;font-size:11px;color:#fff;left:118.5px;transform-origin:0 0;transform:scaleX(0.9529);">4</span>
<span id="t48" style="top:162.5px;line-height:15px;font-size:11px;color:#fff;left:168.5px;transform-origin:0 0;transform:scaleX(0.9292);">E:\NFS\BS-Datenplatte\Win 7\Win 7-flat.vmdk</span>
<span id="t49" style="top:162.5px;line-height:15px;font-size:11px;color:#fff;right:518.5px;transform-origin:100% 0;transform:scaleX(0.9529);">0</span>
<span id="t50" style="top:162.5px;line-height:15px;font-size:11px;color:#fff;right:438.5px;transform-origin:100% 0;transform:scaleX(0.8296);">18.264.849</span>
<span id="t51" style="top:162.5px;line-height:15px;font-size:11px;color:#fff;right:358.5px;transform-origin:100% 0;transform:scaleX(0.8296);">18.264.849</span>
<span id="t52" style="top:162.5px;line-height:15px;font-size:11px;color:#fff;left:672.5px;transform-origin:0 0;transform:scaleX(0.8939);">Normal</span>
<span id="t53" style="top:162.5px;line-height:15px;font-size:11px;color:#fff;right:198.5px;transform-origin:100% 0;transform:scaleX(0.9529);">4</span>
<span id="t54" style="top:178.5px;line-height:15px;font-size:11px;color:#000;left:18.5px;transform-origin:0 0;transform:scaleX(0.8671);">System</span>
<span id="t55" style="top:178.5px;line-height:15px;font-size:11px;color:#000;left:118.5px;transform-origin:0 0;transform:scaleX(0.9529);">4</span>
<span id="t56" style="top:178.5px;line-height:15px;font-size:11px;color:#000;left:168.5px;transform-origin:0 0;transform:scaleX(0.9704);">E:\$LogFile (NTFS-Volumeprotokoll)</span>
<span id="t57" style="top:178.5px;line-height:15px;font-size:11px;color:#000;right:518.5px;transform-origin:100% 0;transform:scaleX(0.9529);">0</span>
<span id="t58" style="top:178.5px;line-height:15px;font-size:11px;color:#000;right:438.5px;transform-origin:100% 0;transform:scaleX(0.8309);">687.617</span>
<span id="t59" style="top:178.5px;line-height:15px;font-size:11px;color:#000;right:358.5px;transform-origin:100% 0;transform:scaleX(0.8309);">687.617</span>
<span id="t60" style="top:178.5px;line-height:15px;font-size:11px;color:#000;left:672.5px;transform-origin:0 0;transform:scaleX(0.8939);">Normal</span>
<span id="t61" style="top:178.5px;line-height:15px;font-size:11px;color:#000;right:198.5px;transform-origin:100% 0;transform:scaleX(0.9529);">1</span>
<span id="t62" style="top:194.5px;line-height:15px;font-size:11px;color:#000;left:18.5px;transform-origin:0 0;transform:scaleX(0.8671);">System</span>
<span id="t63" style="top:194.5px;line-height:15px;font-size:11px;color:#000;left:118.5px;transform-origin:0 0;transform:scaleX(0.9529);">4</span>
<span id="t64" style="top:194.5px;line-height:15px;font-size:11px;color:#000;left:168.5px;transform-origin:0 0;transform:scaleX(0.9092);">E:\$Mft (NTFS-Masterdateitabelle)</span>
<span id="t65" style="top:194.5px;line-height:15px;font-size:11px;color:#000;right:518.5px;transform-origin:100% 0;transform:scaleX(0.9529);">0</span>
<span id="t66" style="top:194.5px;line-height:15px;font-size:11px;color:#000;right:438.5px;transform-origin:100% 0;transform:scaleX(0.8472);">1.820</span>
<span id="t67" style="top:194.5px;line-height:15px;font-size:11px;color:#000;right:358.5px;transform-origin:100% 0;transform:scaleX(0.8472);">1.820</span>
<span id="t68" style="top:194.5px;line-height:15px;font-size:11px;color:#000;left:672.5px;transform-origin:0 0;transform:scaleX(0.8939);">Normal</span>
<span id="t69" style="top:194.5px;line-height:15px;font-size:11px;color:#000;right:198.5px;transform-origin:100% 0;transform:scaleX(0.9529);">0</span>
<span id="t70" style="top:210.5px;line-height:15px;font-size:11px;color:#000;left:18.5px;transform-origin:0 0;transform:scaleX(0.8671);">System</span>
<span id="t71" style="top:210.5px;line-height:15px;font-size:11px;color:#000;left:118.5px;transform-origin:0 0;transform:scaleX(0.9529);">4</span>
<span id="t72" style="top:210.5px;line-height:15px;font-size:11px;color:#000;left:168.5px;transform-origin:0 0;transform:scaleX(0.9493);">C:\Windows\System32\config\SYSTEM.LOG1</span>
<span id="t73" style="top:210.5px;line-height:15px;font-size:11px;color:#000;right:518.5px;transform-origin:100% 0;transform:scaleX(0.9529);">0</span>
<span id="t74" style="top:210.5px;line-height:15px;font-size:11px;color:#000;right:438.5px;transform-origin:100% 0;transform:scaleX(0.8472);">1.396</span>
<span id="t75" style="top:210.5px;line-height:15px;font-size:11px;color:#000;right:358.5px;transform-origin:100% 0;transform:scaleX(0.8472);">1.396</span>
<span id="t76" style="top:210.5px;line-height:15px;font-size:11px;color:#000;left:672.5px;transform-origin:0 0;transform:scaleX(0.8939);">Normal</span>
<span id="t77" style="top:210.5px;line-height:15px;font-size:11px;color:#000;right:198.5px;transform-origin:100% 0;transform:scaleX(0.9529);">0</span>
<span id="t78" style="top:226.5px;line-height:15px;font-size:11px;color:#000;left:18.5px;transform-origin:0 0;transform:scaleX(0.8671);">System</span>
<span id="t79" style="top:226.5px;line-height:15px;font-size:11px;color:#000;left:118.5px;transform-origin:0 0;transform:scaleX(0.9529);">4</span>
<span id="t80" style="top:226.5px;line-height:15px;font-size:11px;color:#000;left:168.5px;transform-origin:0 0;transform:scaleX(0.9520);">C:\Windows\System32\config\SYSTEM</span>
<span id="t81" style="top:226.5px;line-height:15px;font-size:11px;color:#000;right:518.5px;transform-origin:100% 0;transform:scaleX(0.9529);">0</span>
<span id="t82" style="top:226.5px;line-height:15px;font-size:11px;color:#000;right:438.5px;transform-origin:100% 0;transform:scaleX(0.8472);">1.306</span>
<span id="t83" style="top:226.5px;line-height:15px;font-size:11px;color:#000;right:358.5px;transform-origin:100% 0;transform:scaleX(0.8472);">1.306</span>
<span id="t84" style="top:226.5px;line-height:15px;font-size:11px;color:#000;left:672.5px;transform-origin:0 0;transform:scaleX(0.8939);">Normal</span>
<span id="t85" style="top:226.5px;line-height:15px;font-size:11px;color:#000;right:198.5px;transform-origin:100% 0;transform:scaleX(0.9529);">1</span>
<span id="t86" style="top:242.5px;line-height:15px;font-size:11px;color:#000;left:18.5px;transform-origin:0 0;transform:scaleX(0.8671);">System</span>
<span id="t87" style="top:242.5px;line-height:15px;font-size:11px;color:#000;left:118.5px;transform-origin:0 0;transform:scaleX(0.9529);">4</span>
<span id="t88" style="top:242.5px;line-height:15px;font-size:11px;color:#000;left:168.5px;transform-origin:0 0;transform:scaleX(0.9431);">C:\Windows\System32\config</span>
<span id="t89" style="top:242.5px;line-height:15px;font-size:11px;color:#000;right:518.5px;transform-origin:100% 0;transform:scaleX(0.9529);">0</span>
<span id="t90" style="top:242.5px;line-height:15px;font-size:11px;color:#000;right:438.5px;transform-origin:100% 0;transform:scaleX(0.7940);">546</span>
<span id="t91" style="top:242.5px;line-height:15px;font-size:11px;color:#000;right:358.5px;transform-origin:100% 0;transform:scaleX(0.7940);">546</span>
<span id="t92" style="top:242.5px;line-height:15px;font-size:11px;color:#000;left:672.5px;transform-origin:0 0;transform:scaleX(0.8939);">Normal</span>
<span id="t93" style="top:242.5px;line-height:15px;font-size:11px;color:#000;right:198.5px;transform-origin:100% 0;transform:scaleX(0.9529);">0</span>
<div class="hatch" style="left:797px;top:145px;width:16px;height:112px;"></div>
<div style="left:797px;top:145px;width:16px;height:16px;background:#d4d0c8;"></div>
<div style="left:798px;top:146px;width:13px;height:1px;background:#ffffff;"></div>
<div style="left:798px;top:146px;width:1px;height:13px;background:#ffffff;"></div>
<div style="left:797px;top:160px;width:16px;height:1px;background:#404040;"></div>
<div style="left:812px;top:145px;width:1px;height:16px;background:#404040;"></div>
<div style="left:798px;top:159px;width:14px;height:1px;background:#808080;"></div>
<div style="left:811px;top:146px;width:1px;height:14px;background:#808080;"></div>
<div style="left:804px;top:151px;width:1px;height:1px;background:#000;"></div>
<div style="left:803px;top:152px;width:3px;height:1px;background:#000;"></div>
<div style="left:802px;top:153px;width:5px;height:1px;background:#000;"></div>
<div style="left:801px;top:154px;width:7px;height:1px;background:#000;"></div>
<div style="left:797px;top:161px;width:16px;height:31px;background:#d4d0c8;"></div>
<div style="left:798px;top:162px;width:13px;height:1px;background:#ffffff;"></div>
<div style="left:798px;top:162px;width:1px;height:28px;background:#ffffff;"></div>
<div style="left:797px;top:191px;width:16px;height:1px;background:#404040;"></div>
<div style="left:812px;top:161px;width:1px;height:31px;background:#404040;"></div>
<div style="left:798px;top:190px;width:14px;height:1px;background:#808080;"></div>
<div style="left:811px;top:162px;width:1px;height:29px;background:#808080;"></div>
<div style="left:797px;top:241px;width:16px;height:16px;background:#d4d0c8;"></div>
<div style="left:798px;top:242px;width:13px;height:1px;background:#ffffff;"></div>
<div style="left:798px;top:242px;width:1px;height:13px;background:#ffffff;"></div>
<div style="left:797px;top:256px;width:16px;height:1px;background:#404040;"></div>
<div style="left:812px;top:241px;width:1px;height:16px;background:#404040;"></div>
<div style="left:798px;top:255px;width:14px;height:1px;background:#808080;"></div>
<div style="left:811px;top:242px;width:1px;height:14px;background:#808080;"></div>
<div style="left:801px;top:247px;width:7px;height:1px;background:#000;"></div>
<div style="left:802px;top:248px;width:5px;height:1px;background:#000;"></div>
<div style="left:803px;top:249px;width:3px;height:1px;background:#000;"></div>
<div style="left:804px;top:250px;width:1px;height:1px;background:#000;"></div>
<div style="left:12px;top:264px;width:802px;height:108px;background:#646464;"></div>
<div style="left:13px;top:265px;width:800px;height:106px;background:#d4d0c8;"></div>
<span id="t94" style="top:270.0px;line-height:17px;font-size:13px;color:#000;font-family:'Liberation Sans',sans-serif;left:18.5px;transform-origin:0 0;transform:scaleX(0.9744);">Speicher</span>
<div style="left:794px;top:274px;width:1px;height:1px;background:#000;"></div>
<div style="left:793px;top:275px;width:3px;height:1px;background:#000;"></div>
<div style="left:792px;top:276px;width:5px;height:1px;background:#000;"></div>
<div style="left:791px;top:277px;width:7px;height:1px;background:#000;"></div>
<div style="left:790px;top:278px;width:9px;height:1px;background:#000;"></div>
<div style="left:13px;top:293px;width:800px;height:1px;background:#808080;"></div>
<div style="left:13px;top:294px;width:800px;height:75px;background:#ffffff;"></div>
<div style="left:13px;top:294px;width:100px;height:16px;background:#d4d0c8;"></div>
<div style="left:13px;top:294px;width:99px;height:1px;background:#ffffff;"></div>
<div style="left:13px;top:294px;width:1px;height:15px;background:#ffffff;"></div>
<div style="left:13px;top:309px;width:100px;height:1px;background:#404040;"></div>
<div style="left:112px;top:294px;width:1px;height:16px;background:#404040;"></div>
<div style="left:14px;top:308px;width:98px;height:1px;background:#808080;"></div>
<div style="left:111px;top:295px;width:1px;height:14px;background:#808080;"></div>
<div style="left:113px;top:294px;width:80px;height:16px;background:#d4d0c8;"></div>
<div style="left:113px;top:294px;width:79px;height:1px;background:#ffffff;"></div>
<div style="left:113px;top:294px;width:1px;height:15px;background:#ffffff;"></div>
<div style="left:113px;top:309px;width:80px;height:1px;background:#404040;"></div>
<div style="left:192px;top:294px;width:1px;height:16px;background:#404040;"></div>
<div style="left:114px;top:308px;width:78px;height:1px;background:#808080;"></div>
<div style="left:191px;top:295px;width:1px;height:14px;background:#808080;"></div>
<div style="left:193px;top:294px;width:80px;height:16px;background:#d4d0c8;"></div>
<div style="left:193px;top:294px;width:79px;height:1px;background:#ffffff;"></div>
<div style="left:193px;top:294px;width:1px;height:15px;background:#ffffff;"></div>
<div style="left:193px;top:309px;width:80px;height:1px;background:#404040;"></div>
<div style="left:272px;top:294px;width:1px;height:16px;background:#404040;"></div>
<div style="left:194px;top:308px;width:78px;height:1px;background:#808080;"></div>
<div style="left:271px;top:295px;width:1px;height:14px;background:#808080;"></div>
<div style="left:273px;top:294px;width:80px;height:16px;background:#d4d0c8;"></div>
<div style="left:273px;top:294px;width:79px;height:1px;background:#ffffff;"></div>
<div style="left:273px;top:294px;width:1px;height:15px;background:#ffffff;"></div>
<div style="left:273px;top:309px;width:80px;height:1px;background:#404040;"></div>
<div style="left:352px;top:294px;width:1px;height:16px;background:#404040;"></div>
<div style="left:274px;top:308px;width:78px;height:1px;background:#808080;"></div>
<div style="left:351px;top:295px;width:1px;height:14px;background:#808080;"></div>
<div style="left:353px;top:294px;width:80px;height:16px;background:#d4d0c8;"></div>
<div style="left:353px;top:294px;width:79px;height:1px;background:#ffffff;"></div>
<div style="left:353px;top:294px;width:1px;height:15px;background:#ffffff;"></div>
<div style="left:353px;top:309px;width:80px;height:1px;background:#404040;"></div>
<div style="left:432px;top:294px;width:1px;height:16px;background:#404040;"></div>
<div style="left:354px;top:308px;width:78px;height:1px;background:#808080;"></div>
<div style="left:431px;top:295px;width:1px;height:14px;background:#808080;"></div>
<div style="left:433px;top:294px;width:244px;height:16px;background:#d4d0c8;"></div>
<div style="left:433px;top:294px;width:243px;height:1px;background:#ffffff;"></div>
<div style="left:433px;top:294px;width:1px;height:15px;background:#ffffff;"></div>
<div style="left:433px;top:309px;width:244px;height:1px;background:#404040;"></div>
<div style="left:676px;top:294px;width:1px;height:16px;background:#404040;"></div>
<div style="left:434px;top:308px;width:242px;height:1px;background:#808080;"></div>
<div style="left:675px;top:295px;width:1px;height:14px;background:#808080;"></div>
<div style="left:677px;top:294px;width:136px;height:16px;background:#d4d0c8;"></div>
<div style="left:677px;top:294px;width:136px;height:1px;background:#ffffff;"></div>
<div style="left:677px;top:294px;width:1px;height:15px;background:#ffffff;"></div>
<div style="left:677px;top:309px;width:136px;height:1px;background:#404040;"></div>
<div style="left:678px;top:308px;width:135px;height:1px;background:#808080;"></div>
<span id="t95" style="top:294.5px;line-height:15px;font-size:11px;color:#000;left:18.5px;transform-origin:0 0;transform:scaleX(0.9164);">Logischer ...</span>
<span id="t96" style="top:294.5px;line-height:15px;font-size:11px;color:#000;left:118.5px;transform-origin:0 0;transform:scaleX(0.9007);">Physikalische...</span>
<span id="t97" style="top:294.5px;line-height:15px;font-size:11px;color:#000;right:716.5px;transform-origin:100% 0;transform:scaleX(0.9265);">Aktive Zeit (...</span>
<span id="t98" style="top:294.5px;line-height:15px;font-size:11px;color:#000;right:636.5px;transform-origin:100% 0;transform:scaleX(0.9435);">Verfügbarer ...</span>
<span id="t99" style="top:294.5px;line-height:15px;font-size:11px;color:#000;right:556.5px;transform-origin:100% 0;transform:scaleX(0.8943);">Gesamter Sp...</span>
<span id="t100" style="top:294.5px;line-height:15px;font-size:11px;color:#000;right:312.5px;transform-origin:100% 0;transform:scaleX(0.8931);">Länge der Datenträgerwarteschlange</span>
<div style="left:90px;top:300px;width:1px;height:1px;background:#8c8c8c;"></div>
<div style="left:89px;top:301px;width:3px;height:1px;background:#8c8c8c;"></div>
<div style="left:88px;top:302px;width:5px;height:1px;background:#8c8c8c;"></div>
<span id="t101" style="top:311.0px;line-height:15px;font-size:11px;color:#000;left:18.5px;transform-origin:0 0;transform:scaleX(0.9756);">C:</span>
<span id="t102" style="top:311.0px;line-height:15px;font-size:11px;color:#000;left:118.5px;transform-origin:0 0;transform:scaleX(0.9529);">0</span>
<span id="t103" style="top:311.0px;line-height:15px;font-size:11px;color:#000;right:716.5px;transform-origin:100% 0;transform:scaleX(0.8624);">0.00</span>
<span id="t104" style="top:311.0px;line-height:15px;font-size:11px;color:#000;right:636.5px;transform-origin:100% 0;transform:scaleX(0.8375);">28.802</span>
<span id="t105" style="top:311.0px;line-height:15px;font-size:11px;color:#000;right:556.5px;transform-origin:100% 0;transform:scaleX(0.8375);">76.217</span>
<span id="t106" style="top:311.0px;line-height:15px;font-size:11px;color:#000;right:312.5px;transform-origin:100% 0;transform:scaleX(0.8624);">0.00</span>
<span id="t107" style="top:327.0px;line-height:15px;font-size:11px;color:#000;left:18.5px;transform-origin:0 0;transform:scaleX(1.0423);">E:</span>
<span id="t108" style="top:327.0px;line-height:15px;font-size:11px;color:#000;left:118.5px;transform-origin:0 0;transform:scaleX(0.9529);">1</span>
<span id="t109" style="top:327.0px;line-height:15px;font-size:11px;color:#000;right:716.5px;transform-origin:100% 0;transform:scaleX(0.8472);">95.21</span>
<span id="t110" style="top:327.0px;line-height:15px;font-size:11px;color:#000;right:636.5px;transform-origin:100% 0;transform:scaleX(0.8340);">5.157.641</span>
<span id="t111" style="top:327.0px;line-height:15px;font-size:11px;color:#000;right:556.5px;transform-origin:100% 0;transform:scaleX(0.8340);">9.536.561</span>
<span id="t112" style="top:327.0px;line-height:15px;font-size:11px;color:#000;right:312.5px;transform-origin:100% 0;transform:scaleX(0.8624);">1.92</span>
<div class="hatch" style="left:815px;top:77px;width:16px;height:292px;"></div>
<div style="left:815px;top:77px;width:16px;height:16px;background:#d4d0c8;"></div>
<div style="left:816px;top:78px;width:13px;height:1px;background:#ffffff;"></div>
<div style="left:816px;top:78px;width:1px;height:13px;background:#ffffff;"></div>
<div style="left:815px;top:92px;width:16px;height:1px;background:#404040;"></div>
<div style="left:830px;top:77px;width:1px;height:16px;background:#404040;"></div>
<div style="left:816px;top:91px;width:14px;height:1px;background:#808080;"></div>
<div style="left:829px;top:78px;width:1px;height:14px;background:#808080;"></div>
<div style="left:822px;top:83px;width:1px;height:1px;background:#000;"></div>
<div style="left:821px;top:84px;width:3px;height:1px;background:#000;"></div>
<div style="left:820px;top:85px;width:5px;height:1px;background:#000;"></div>
<div style="left:819px;top:86px;width:7px;height:1px;background:#000;"></div>
<div style="left:815px;top:93px;width:16px;height:254px;background:#d4d0c8;"></div>
<div style="left:816px;top:94px;width:13px;height:1px;background:#ffffff;"></div>
<div style="left:816px;top:94px;width:1px;height:251px;background:#ffffff;"></div>
<div style="left:815px;top:346px;width:16px;height:1px;background:#404040;"></div>
<div style="left:830px;top:93px;width:1px;height:254px;background:#404040;"></div>
<div style="left:816px;top:345px;width:14px;height:1px;background:#808080;"></div>
<div style="left:829px;top:94px;width:1px;height:252px;background:#808080;"></div>
<div style="left:815px;top:353px;width:16px;height:16px;background:#d4d0c8;"></div>
<div style="left:816px;top:354px;width:13px;height:1px;background:#ffffff;"></div>
<div style="left:816px;top:354px;width:1px;height:13px;background:#ffffff;"></div>
<div style="left:815px;top:368px;width:16px;height:1px;background:#404040;"></div>
<div style="left:830px;top:353px;width:1px;height:16px;background:#404040;"></div>
<div style="left:816px;top:367px;width:14px;height:1px;background:#808080;"></div>
<div style="left:829px;top:354px;width:1px;height:14px;background:#808080;"></div>
<div style="left:819px;top:359px;width:7px;height:1px;background:#000;"></div>
<div style="left:820px;top:360px;width:5px;height:1px;background:#000;"></div>
<div style="left:821px;top:361px;width:3px;height:1px;background:#000;"></div>
<div style="left:822px;top:362px;width:1px;height:1px;background:#000;"></div>
<div style="left:837px;top:79px;width:160px;height:290px;background:#646464;"></div>
<div style="left:838px;top:80px;width:159px;height:289px;background:#ffffff;"></div>
<div style="left:838px;top:80px;width:159px;height:28px;background:#d4d0c8;"></div>
<div style="left:838px;top:108px;width:159px;height:1px;background:#646464;"></div>
<div style="left:856px;top:88px;width:1px;height:9px;background:#000;"></div>
<div style="left:857px;top:89px;width:1px;height:7px;background:#000;"></div>
<div style="left:858px;top:90px;width:1px;height:5px;background:#000;"></div>
<div style="left:859px;top:91px;width:1px;height:3px;background:#000;"></div>
<div style="left:860px;top:92px;width:1px;height:1px;background:#000;"></div>
<div style="left:936px;top:81px;width:60px;height:26px;background:#d4d0c8;"></div>
<div style="left:936px;top:81px;width:59px;height:1px;background:#ffffff;"></div>
<div style="left:936px;top:81px;width:1px;height:25px;background:#ffffff;"></div>
<div style="left:936px;top:106px;width:60px;height:1px;background:#404040;"></div>
<div style="left:995px;top:81px;width:1px;height:26px;background:#404040;"></div>
<div style="left:937px;top:105px;width:58px;height:1px;background:#808080;"></div>
<div style="left:994px;top:82px;width:1px;height:24px;background:#808080;"></div>
<span id="t113" style="top:86.5px;line-height:15px;font-size:11px;color:#000;left:949.5px;transform-origin:0 0;transform:scaleX(0.9888);">Ans</span>
<span id="t114" style="top:112.5px;line-height:15px;font-size:11px;color:#000;font-weight:bold;left:848.5px;transform-origin:0 0;transform:scaleX(1.0240);">Datenträger</span>
<span id="t115" style="top:112.5px;line-height:15px;font-size:11px;color:#000;font-weight:bold;left:963.5px;transform-origin:0 0;transform:scaleX(0.8707);">1</span>
<span id="t116" style="top:231.5px;line-height:15px;font-size:11px;color:#000;font-weight:bold;left:848.5px;transform-origin:0 0;transform:scaleX(1.0058);">60 Sekunden</span>
<span id="t117" style="top:246.5px;line-height:15px;font-size:11px;color:#000;font-weight:bold;left:848.5px;transform-origin:0 0;transform:scaleX(1.0200);">Datenträger &quot;0&quot; (C:);</span>
<svg style="left:848px;top:128px" width="120" height="225" viewBox="848 128 120 225"><rect x="848" y="128" width="121" height="103" fill="#808080"/><rect x="849" y="129" width="120" height="101" fill="#000"/><rect x="848" y="262" width="121" height="100" fill="#808080"/><rect x="849" y="263" width="120" height="100" fill="#000"/><polygon points="849,230 849.9,214.4 853.2,212.4 857.2,213.1 861.2,216.4 865.1,212.0 868.4,215.7 875.0,212.4 877.0,215.0 880.7,210.4 886.3,215.7 890.2,213.7 892.2,209.8 894.9,211.1 898.2,207.5 902.1,212.4 904.8,213.1 908.7,211.1 911.4,212.4 915.3,217.3 919.3,215.0 922.6,210.4 926.6,218.3 929.9,213.1 933.8,214.4 937.1,208.4 940.4,209.8 943.1,208.4 946.4,210.4 949.7,209.1 952.3,216.4 956.3,211.1 958.3,210.4 961.6,215.7 965.5,208.4 967.5,207.1 969.5,206.5 969,230" fill="#006400"/><rect x="862" y="129" width="1" height="101" fill="#008000"/><rect x="862" y="263" width="1" height="100" fill="#008000"/><rect x="877" y="129" width="1" height="101" fill="#008000"/><rect x="877" y="263" width="1" height="100" fill="#008000"/><rect x="892" y="129" width="1" height="101" fill="#008000"/><rect x="892" y="263" width="1" height="100" fill="#008000"/><rect x="907" y="129" width="1" height="101" fill="#008000"/><rect x="907" y="263" width="1" height="100" fill="#008000"/><rect x="922" y="129" width="1" height="101" fill="#008000"/><rect x="922" y="263" width="1" height="100" fill="#008000"/><rect x="937" y="129" width="1" height="101" fill="#008000"/><rect x="937" y="263" width="1" height="100" fill="#008000"/><rect x="952" y="129" width="1" height="101" fill="#008000"/><rect x="952" y="263" width="1" height="100" fill="#008000"/><rect x="967" y="129" width="1" height="101" fill="#008000"/><rect x="967" y="263" width="1" height="100" fill="#008000"/><rect x="849" y="140" width="120" height="1" fill="#008000"/><rect x="849" y="150" width="120" height="1" fill="#008000"/><rect x="849" y="160" width="120" height="1" fill="#008000"/><rect x="849" y="170" width="120" height="1" fill="#008000"/><rect x="849" y="180" width="120" height="1" fill="#008000"/><rect x="849" y="190" width="120" height="1" fill="#008000"/><rect x="849" y="200" width="120" height="1" fill="#008000"/><rect x="849" y="210" width="120" height="1" fill="#008000"/><rect x="849" y="220" width="120" height="1" fill="#008000"/><rect x="849" y="274" width="120" height="1" fill="#008000"/><rect x="849" y="284" width="120" height="1" fill="#008000"/><rect x="849" y="294" width="120" height="1" fill="#008000"/><rect x="849" y="304" width="120" height="1" fill="#008000"/><rect x="849" y="314" width="120" height="1" fill="#008000"/><rect x="849" y="324" width="120" height="1" fill="#008000"/><rect x="849" y="334" width="120" height="1" fill="#008000"/><rect x="849" y="344" width="120" height="1" fill="#008000"/><rect x="849" y="354" width="120" height="1" fill="#008000"/><clipPath id="cf"><polygon points="849,230 849.9,214.4 853.2,212.4 857.2,213.1 861.2,216.4 865.1,212.0 868.4,215.7 875.0,212.4 877.0,215.0 880.7,210.4 886.3,215.7 890.2,213.7 892.2,209.8 894.9,211.1 898.2,207.5 902.1,212.4 904.8,213.1 908.7,211.1 911.4,212.4 915.3,217.3 919.3,215.0 922.6,210.4 926.6,218.3 929.9,213.1 933.8,214.4 937.1,208.4 940.4,209.8 943.1,208.4 946.4,210.4 949.7,209.1 952.3,216.4 956.3,211.1 958.3,210.4 961.6,215.7 965.5,208.4 967.5,207.1 969.5,206.5 969,230"/></clipPath><g clip-path="url(#cf)"><rect x="862" y="200" width="1" height="30" fill="#00e000"/><rect x="877" y="200" width="1" height="30" fill="#00e000"/><rect x="892" y="200" width="1" height="30" fill="#00e000"/><rect x="907" y="200" width="1" height="30" fill="#00e000"/><rect x="922" y="200" width="1" height="30" fill="#00e000"/><rect x="937" y="200" width="1" height="30" fill="#00e000"/><rect x="952" y="200" width="1" height="30" fill="#00e000"/><rect x="967" y="200" width="1" height="30" fill="#00e000"/><rect x="849" y="210" width="120" height="1" fill="#00e000"/><rect x="849" y="220" width="120" height="1" fill="#00e000"/></g><polyline points="849.9,214.4 853.2,212.4 857.2,213.1 861.2,216.4 865.1,212.0 868.4,215.7 875.0,212.4 877.0,215.0 880.7,210.4 886.3,215.7 890.2,213.7 892.2,209.8 894.9,211.1 898.2,207.5 902.1,212.4 904.8,213.1 908.7,211.1 911.4,212.4 915.3,217.3 919.3,215.0 922.6,210.4 926.6,218.3 929.9,213.1 933.8,214.4 937.1,208.4 940.4,209.8 943.1,208.4 946.4,210.4 949.7,209.1 952.3,216.4 956.3,211.1 958.3,210.4 961.6,215.7 965.5,208.4 967.5,207.1 969.5,206.5" fill="none" stroke="#00ff00" stroke-width="1.3"/><clipPath id="ca"><rect x="849" y="129" width="120" height="101"/></clipPath><polyline clip-path="url(#ca)" points="850.1,137.1 853.7,135.8 855.3,135.8 856.8,137.3 857.1,168.1 858.7,168.6 858.7,235.7 860.4,235.7 860.4,183.4 861.9,182.9 862.2,158.8 863.5,148.6 865.0,143.0 868.1,149.1 870.9,136.8 873.7,139.4 877.5,135.1 880.4,137.8 896.3,137.8 898.3,135.1 900.4,137.3 911.1,137.3 900.0,137.1 910.8,137.1 913.3,134.0 915.9,137.1 919.5,137.1 922.0,135.8 924.1,133.7 925.6,134.2 926.1,165.5 927.5,166.5 927.5,235.7 929.6,235.7 929.6,170.6 931.0,169.6 931.3,139.9 934.3,138.3 935.9,140.2 941.0,139.9 946.6,134.8 949.2,137.3 952.3,147.1 955.3,138.9 958.4,134.0 962.0,137.8 965.1,137.3 967.6,134.8 970.7,134.2" fill="none" stroke="#3c6cf4" stroke-width="2.4" stroke-linejoin="round"/><path d="M918 353V347L919.6 343L921 348L922.8 353ZM935.5 353L936.5 351V342L937.5 336.5L938.5 342V351L940 353ZM965.5 353L967 346L967.6 339L969 339V353Z" fill="#00ff00"/></svg>
<div class="hatch" style="left:968px;top:77px;width:16px;height:276px;"></div>
<div style="left:968px;top:77px;width:16px;height:16px;background:#d4d0c8;"></div>
<div style="left:969px;top:78px;width:13px;height:1px;background:#ffffff;"></div>
<div style="left:969px;top:78px;width:1px;height:13px;background:#ffffff;"></div>
<div style="left:968px;top:92px;width:16px;height:1px;background:#404040;"></div>
<div style="left:983px;top:77px;width:1px;height:16px;background:#404040;"></div>
<div style="left:969px;top:91px;width:14px;height:1px;background:#808080;"></div>
<div style="left:982px;top:78px;width:1px;height:14px;background:#808080;"></div>
<div style="left:975px;top:83px;width:1px;height:1px;background:#000;"></div>
<div style="left:974px;top:84px;width:3px;height:1px;background:#000;"></div>
<div style="left:973px;top:85px;width:5px;height:1px;background:#000;"></div>
<div style="left:972px;top:86px;width:7px;height:1px;background:#000;"></div>
<div style="left:968px;top:93px;width:16px;height:151px;background:#d4d0c8;"></div>
<div style="left:969px;top:94px;width:13px;height:1px;background:#ffffff;"></div>
<div style="left:969px;top:94px;width:1px;height:148px;background:#ffffff;"></div>
<div style="left:968px;top:243px;width:16px;height:1px;background:#404040;"></div>
<div style="left:983px;top:93px;width:1px;height:151px;background:#404040;"></div>
<div style="left:969px;top:242px;width:14px;height:1px;background:#808080;"></div>
<div style="left:982px;top:94px;width:1px;height:149px;background:#808080;"></div>
<div style="left:968px;top:337px;width:16px;height:16px;background:#d4d0c8;"></div>
<div style="left:969px;top:338px;width:13px;height:1px;background:#ffffff;"></div>
<div style="left:969px;top:338px;width:1px;height:13px;background:#ffffff;"></div>
<div style="left:968px;top:352px;width:16px;height:1px;background:#404040;"></div>
<div style="left:983px;top:337px;width:1px;height:16px;background:#404040;"></div>
<div style="left:969px;top:351px;width:14px;height:1px;background:#808080;"></div>
<div style="left:982px;top:338px;width:1px;height:14px;background:#808080;"></div>
<div style="left:972px;top:343px;width:7px;height:1px;background:#000;"></div>
<div style="left:973px;top:344px;width:5px;height:1px;background:#000;"></div>
<div style="left:974px;top:345px;width:3px;height:1px;background:#000;"></div>
<div style="left:975px;top:346px;width:1px;height:1px;background:#000;"></div>
<div class="hatch" style="left:837px;top:353px;width:131px;height:16px;"></div>
<div style="left:837px;top:353px;width:16px;height:16px;background:#d4d0c8;"></div>
<div style="left:838px;top:354px;width:13px;height:1px;background:#ffffff;"></div>
<div style="left:838px;top:354px;width:1px;height:13px;background:#ffffff;"></div>
<div style="left:837px;top:368px;width:16px;height:1px;background:#404040;"></div>
<div style="left:852px;top:353px;width:1px;height:16px;background:#404040;"></div>
<div style="left:838px;top:367px;width:14px;height:1px;background:#808080;"></div>
<div style="left:851px;top:354px;width:1px;height:14px;background:#808080;"></div>
<div style="left:842px;top:360px;width:1px;height:1px;background:#000;"></div>
<div style="left:843px;top:359px;width:1px;height:3px;background:#000;"></div>
<div style="left:844px;top:358px;width:1px;height:5px;background:#000;"></div>
<div style="left:845px;top:357px;width:1px;height:7px;background:#000;"></div>
<div style="left:853px;top:353px;width:65px;height:16px;background:#d4d0c8;"></div>
<div style="left:854px;top:354px;width:62px;height:1px;background:#ffffff;"></div>
<div style="left:854px;top:354px;width:1px;height:13px;background:#ffffff;"></div>
<div style="left:853px;top:368px;width:65px;height:1px;background:#404040;"></div>
<div style="left:917px;top:353px;width:1px;height:16px;background:#404040;"></div>
<div style="left:854px;top:367px;width:63px;height:1px;background:#808080;"></div>
<div style="left:916px;top:354px;width:1px;height:14px;background:#808080;"></div>
<div style="left:952px;top:353px;width:16px;height:16px;background:#d4d0c8;"></div>
<div style="left:953px;top:354px;width:13px;height:1px;background:#ffffff;"></div>
<div style="left:953px;top:354px;width:1px;height:13px;background:#ffffff;"></div>
<div style="left:952px;top:368px;width:16px;height:1px;background:#404040;"></div>
<div style="left:967px;top:353px;width:1px;height:16px;background:#404040;"></div>
<div style="left:953px;top:367px;width:14px;height:1px;background:#808080;"></div>
<div style="left:966px;top:354px;width:1px;height:14px;background:#808080;"></div>
<div style="left:958px;top:357px;width:1px;height:7px;background:#000;"></div>
<div style="left:959px;top:358px;width:1px;height:5px;background:#000;"></div>
<div style="left:960px;top:359px;width:1px;height:3px;background:#000;"></div>
<div style="left:961px;top:360px;width:1px;height:1px;background:#000;"></div>
<div style="left:968px;top:353px;width:16px;height:16px;background:#ffffff;"></div>
<div style="left:7px;top:369px;width:981px;height:2px;background:#d4d0c8;"></div>
<div style="left:8px;top:369px;width:1px;height:2px;background:#ffffff;"></div>
<div style="left:8px;top:371px;width:980px;height:1px;background:#808080;"></div>
<div style="left:7px;top:372px;width:981px;height:1px;background:#404040;"></div>
</body></html>
